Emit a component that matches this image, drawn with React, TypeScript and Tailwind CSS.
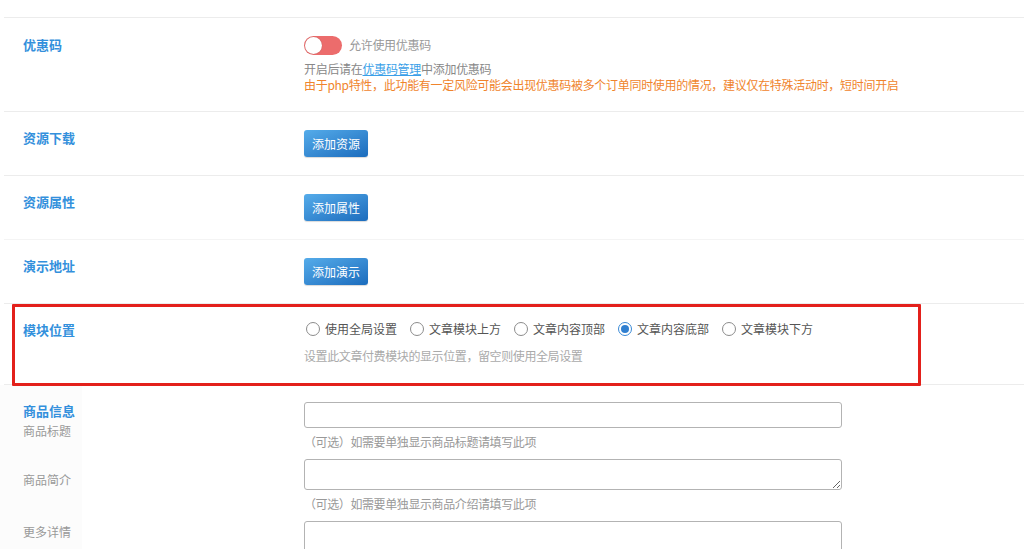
import React from "react";

const Label = ({ children }: { children: React.ReactNode }) => (
  <div className="w-[300px] shrink-0 pl-[19px] text-[13px] leading-[18px] font-bold text-[#3390dc]">{children}</div>
);

const BlueButton = ({ children }: { children: React.ReactNode }) => (
  <button className="h-[27px] px-[8px] rounded-[3px] bg-gradient-to-br from-[#55acea] to-[#1b6cbd] text-white text-[12px] leading-[27px] shadow-[0_1px_1px_rgba(0,0,0,0.15)]">
    {children}
  </button>
);

const Radio = ({ label, checked }: { label: string; checked?: boolean }) => (
  <label className="flex items-center mr-[13px]">
    <span
      className={
        checked
          ? "w-[14px] h-[14px] rounded-full border border-[#3a8ad6] flex items-center justify-center bg-white"
          : "w-[14px] h-[14px] rounded-full border border-[#8c8c8c] bg-white"
      }
    >
      {checked && <span className="w-[8px] h-[8px] rounded-full bg-[#2f7fd0]" />}
    </span>
    <span className="ml-[5px] text-[12px] leading-[18px] text-[#555]">{label}</span>
  </label>
);

export default function App() {
  return (
    <div className="w-[1024px] h-[549px] overflow-hidden bg-white font-['Noto_Sans_CJK_SC','Microsoft_YaHei',sans-serif]">
      <div className="ml-[4px] pt-[17px]">
        {/* 优惠码 */}
        <div className="border-t border-[#ececec] flex h-[94px] pt-[18px]">
          <Label>优惠码</Label>
          <div className="flex-1">
            <div className="flex items-center h-[18px]">
              <span className="relative w-[38px] h-[19px] rounded-full bg-[#ec6c6c]">
                <span className="absolute left-[1px] top-[1px] w-[17px] h-[17px] rounded-full bg-white shadow-[0_0_1px_rgba(0,0,0,0.3)]" />
              </span>
              <span className="ml-[7px] text-[12px] leading-[18px] text-[#999] tracking-[-0.3px]">允许使用优惠码</span>
            </div>
            <div className="mt-[7px] text-[12px] leading-[16px] text-[#888] tracking-[-0.3px]">
              开启后请在<span className="text-[#3a9fe8] underline">优惠码管理</span>中添加优惠码
            </div>
            <div className="text-[12px] leading-[16px] text-[#f0842c] tracking-[-0.3px]">
              由于php特性，此功能有一定风险可能会出现优惠码被多个订单同时使用的情况，建议仅在特殊活动时，短时间开启
            </div>
          </div>
        </div>

        {/* 资源下载 */}
        <div className="border-t border-[#ececec] flex h-[64px] items-start">
          <div className="pt-[17px]"><Label>资源下载</Label></div>
          <div className="pt-[18px]"><BlueButton>添加资源</BlueButton></div>
        </div>

        {/* 资源属性 */}
        <div className="border-t border-[#ececec] flex h-[64px] items-start">
          <div className="pt-[17px]"><Label>资源属性</Label></div>
          <div className="pt-[18px]"><BlueButton>添加属性</BlueButton></div>
        </div>

        {/* 演示地址 */}
        <div className="border-t border-[#f4f4f4] flex h-[64px] items-start">
          <div className="pt-[17px]"><Label>演示地址</Label></div>
          <div className="pt-[18px]"><BlueButton>添加演示</BlueButton></div>
        </div>

        {/* 模块位置 */}
        <div className="relative border-t border-[#ececec] flex h-[81px] items-start">
          <div className="pt-[17px]"><Label>模块位置</Label></div>
          <div className="pt-[16px]">
            <div className="flex items-center ml-[2px]">
              <Radio label="使用全局设置" />
              <Radio label="文章模块上方" />
              <Radio label="文章内容顶部" />
              <Radio label="文章内容底部" checked />
              <Radio label="文章模块下方" />
            </div>
            <div className="mt-[10px] text-[12px] leading-[16px] text-[#aaa] tracking-[-0.4px]">
              设置此文章付费模块的显示位置，留空则使用全局设置
            </div>
          </div>
          <div className="absolute left-[8px] top-[0px] w-[909px] h-[82px] border-[3px] border-[#e3201b] rounded-[1px]" />
        </div>

        {/* 商品信息 */}
        <div className="border-t border-[#ececec] flex items-start">
          <div className="w-[300px] shrink-0">
            <div className="-ml-[4px] w-[82px] pl-[23px] pt-[17px] bg-[#fcfcfc] h-[170px]">
              <div className="text-[13px] leading-[18px] font-bold text-[#3390dc]">商品信息</div>
              <div className="mt-[2px] text-[12px] leading-[18px] text-[#999]">商品标题</div>
              <div className="mt-[31px] text-[12px] leading-[18px] text-[#999]">商品简介</div>
              <div className="mt-[34px] text-[12px] leading-[18px] text-[#999]">更多详情</div>
            </div>
          </div>
          <div className="pt-[17px] w-[538px]">
            <input className="block w-[538px] h-[26px] rounded-[3px] border border-[#b3b3b3] bg-white" />
            <div className="mt-[6px] text-[12px] leading-[16px] text-[#999] tracking-[-0.4px]">（可选）如需要单独显示商品标题请填写此项</div>
            <textarea className="block mt-[9px] w-[538px] h-[31px] rounded-[3px] border border-[#b3b3b3] bg-white resize-y" />
            <div className="mt-[6px] text-[12px] leading-[16px] text-[#999] tracking-[-0.4px]">（可选）如需要单独显示商品介绍请填写此项</div>
            <textarea className="block mt-[9px] w-[538px] h-[60px] rounded-[3px] border border-[#b3b3b3] bg-white resize-y" />
          </div>
        </div>
      </div>
    </div>
  );
}
